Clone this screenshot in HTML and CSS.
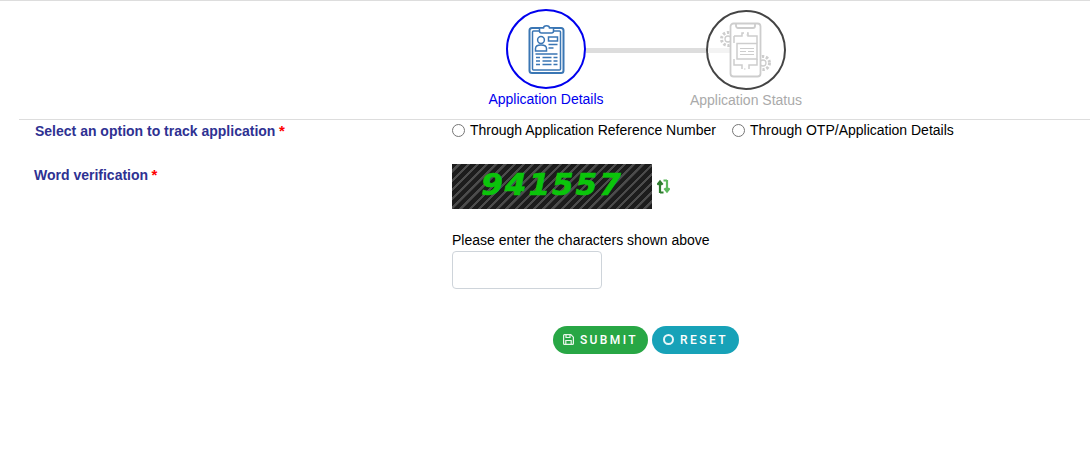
FILE: index.html
```html
<!DOCTYPE html>
<html lang="en">
<head>
    <meta charset="UTF-8">
    <meta name="viewport" content="width=device-width, initial-scale=1.0">
    <title>Track Application</title>
    <link rel="stylesheet" href="styles.css">
</head>
<body>
    <div class="stepper">
        <div class="step step-active">
            <div class="step-circle">
                <svg width="40" height="52" viewBox="-2.500 0 40 52" fill="none" stroke="#3a76b4" stroke-width="1.500">
                    <rect x="1" y="5" width="34" height="45" rx="2.500" stroke-width="2"/>
                    <rect x="4" y="8" width="28" height="39" rx="1"/>
                    <path d="M11 8V5h4c0-3 6-3 6 0h4v3c0 1-1 2-2 2H13c-1 0-2-1-2-2z" fill="#fff"/>
                    <circle cx="12.500" cy="17" r="3.400"/>
                    <path d="M7 28v-2.500c0-2.500 3-3.500 5.500-3.500s5.500 1 5.500 3.500V28z"/>
                    <rect x="20" y="14" width="9" height="4"/>
                    <path d="M20 21.500h9M20 25h5M7 31h22"/>
                    <path d="M7.500 34.500h4M14 34.500h9M25 34.500h4M7.500 38h4M14 38h9M25 38h4M7.500 41.500h4M14 41.500h9M25 41.500h4" stroke-width="1.700"/>
                </svg>
            </div>
            <span class="step-label">Application Details</span>
        </div>
        <div class="step step-pending">
            <div class="step-circle">
                <svg width="58" height="56" viewBox="0 0 58 56" fill="none" stroke="#cdcdcd" stroke-width="1.500">
                    <g stroke-width="1.300">
                        <circle cx="11" cy="17" r="6.500" stroke-width="3" stroke-dasharray="2.400 1.700"/>
                        <circle cx="11" cy="17" r="3"/>
                        <circle cx="46" cy="41" r="6.500" stroke-width="3" stroke-dasharray="2.400 1.700"/>
                        <circle cx="46" cy="41" r="3"/>
                    </g>
                    <rect x="13.500" y="1.500" width="30" height="53" rx="3" fill="#fff" stroke-width="1.800"/>
                    <path d="M19 2v2c0 1 1 2 2 2h15c1 0 2-1 2-2V2" stroke-width="1.800"/>
                    <path d="M17 14h8v-3h2M30 11h1v3h9v7M17 14v7M17 37v6h8v4M32 47v-4h8v-6"/>
                    <path d="M27 47h1.500M29.500 13h1.500" stroke-width="1.200"/>
                    <rect x="20" y="21.500" width="20" height="15.500" fill="#fff"/>
                    <path d="M23 26.500h14M23 29.500h6M31 29.500h6M23 32.500h14" stroke-width="1.200"/>
                </svg>
            </div>
            <span class="step-label">Application Status</span>
        </div>
    </div>

    <form class="track-form">
        <div class="form-row row-option">
            <label class="field-label">Select an option to track application<span class="req">*</span></label>
            <div class="radio-group">
                <label class="radio-item"><input type="radio" name="trackBy"> Through Application Reference Number</label>
                <label class="radio-item"><input type="radio" name="trackBy"> Through OTP/Application Details</label>
            </div>
        </div>
        <div class="form-row row-captcha">
            <label class="field-label">Word verification<span class="req">*</span></label>
            <div class="captcha-col">
                <div class="captcha-line">
                    <div class="captcha-img">941557</div>
                    <svg class="refresh" width="13" height="15" viewBox="0 0 13 15" fill="none" stroke-width="2.200">
                        <path d="M3 14V3M.4 5.800 3 2.500l2.600 3.300M3 13.500h3.500" stroke="#2e7d2e"/>
                        <path d="M10 1v11M7.400 9.200l2.600 3.300 2.600-3.300M10 1.500H6.500" stroke="#5cb85c"/>
                    </svg>
                </div>
                <label class="captcha-hint" for="captcha">Please enter the characters shown above</label>
                <input class="captcha-input" type="text" id="captcha">
            </div>
        </div>
        <div class="btn-row">
            <button type="button" class="btn btn-submit">
                <svg width="11" height="11" viewBox="0 0 11 11" fill="none" stroke="#e8f5ea" stroke-width="1.200"><path d="M.6 1.500c0-.5.4-.9.9-.9h6.300l2.600 2.600v6.300c0 .5-.4.9-.9.9h-8c-.5 0-.9-.4-.9-.9z"/><path d="M3 1v2.500h4V1M2.800 10V6.500h5.400V10"/></svg>
                SUBMIT
            </button>
            <button type="button" class="btn btn-reset"><span class="ring"></span>RESET</button>
        </div>
    </form>
</body>
</html>
```

FILE: styles.css
```css
* {
    margin: 0;
    padding: 0;
    box-sizing: border-box;
}

body {
    font-family: "Liberation Sans", Arial, sans-serif;
    background-color: white;
    border-top: 1px solid #ddd;
    height: 470px;
    overflow: hidden;
}

/* Stepper */
.stepper {
    display: flex;
    justify-content: center;
    margin-left: 202px;
    padding-top: 8px;
    height: 118px;
}

.step {
    width: 200px;
    display: flex;
    flex-direction: column;
    align-items: center;
    position: relative;
}

.step-circle {
    width: 80px;
    height: 80px;
    border-radius: 50%;
    display: flex;
    justify-content: center;
    align-items: center;
}

.step-active .step-circle {
    border: 2px solid #0000ee;
}

.step-pending {
    padding-top: 1px;
}

.step-pending .step-circle {
    border: 2px solid #444;
}

.step-active::after {
    content: "";
    position: absolute;
    left: 140px;
    top: 39px;
    width: 120px;
    height: 5px;
    background-color: #ddd;
}

/* line fades out under the second icon */
.step-pending::before {
    content: "";
    position: absolute;
    left: 62px;
    top: 39px;
    width: 30px;
    height: 5px;
    background-color: #f3f3f3;
}

.step-pending svg {
    position: relative;
    z-index: 1;
}

.step-label {
    font-size: 14px;
    margin-top: 1px;
    line-height: 18px;
}

.step-active .step-label {
    color: #0000ee;
}

.step-pending .step-label {
    color: #aaa;
}

/* Form */
.track-form {
    margin-left: 19px;
    border-top: 1px solid #ddd;
}

.form-row {
    display: flex;
}

.field-label {
    width: 433px;
    font-size: 14px;
    font-weight: bold;
    color: #2e3192;
    line-height: 20px;
}

.req {
    color: red;
    font-size: 15px;
    margin-left: 3.500px;
}

.row-option {
    padding-top: 1px;
    height: 44px;
}

.row-option .field-label {
    padding-left: 16px;
}

.row-captcha .field-label {
    padding-left: 15px;
    padding-top: 1px;
}

.radio-group {
    display: flex;
    align-items: flex-start;
    gap: 16px;
    font-size: 14px;
    line-height: 18px;
    color: #000;
}

.radio-item {
    display: flex;
    align-items: center;
    gap: 5px;
}

.radio-item input {
    width: 13px;
    height: 13px;
}

.captcha-line {
    display: flex;
    align-items: center;
    gap: 5px;
}

.captcha-img {
    width: 200px;
    height: 45px;
    background: repeating-linear-gradient(-45deg, #1c1c1c 0, #1c1c1c 4px, #4c4c4c 4.500px, #4c4c4c 6.500px);
    color: #0bc40b;
    font-family: "DejaVu Sans", sans-serif;
    font-size: 31px;
    font-weight: bold;
    font-style: italic;
    letter-spacing: 2px;
    -webkit-text-stroke: 0.7px #0bc40b;
    line-height: 41px;
    text-align: center;
}

.refresh {
    margin-bottom: 1px;
}

.captcha-hint {
    display: block;
    margin-top: 22px;
    font-size: 14px;
    line-height: 18px;
    color: #000;
}

.captcha-input {
    display: block;
    width: 150px;
    height: 38px;
    margin-top: 2px;
    border: 1px solid #ced4da;
    border-radius: 4px;
}

.btn-row {
    display: flex;
    gap: 4px;
    margin-top: 37px;
    margin-left: 534px;
}

.btn {
    height: 28px;
    border: none;
    border-radius: 14px;
    color: white;
    font-family: Roboto, Arial, sans-serif;
    font-size: 12px;
    font-weight: 500;
    letter-spacing: 2.400px;
    line-height: 26px;
    display: flex;
    align-items: center;
    justify-content: center;
    gap: 6px;
    padding-bottom: 1px;
}

.btn-submit {
    width: 95px;
    background-color: #28a745;
}

.btn-reset {
    width: 87px;
    background-color: #17a2b8;
}

.ring {
    width: 11px;
    height: 11px;
    border: 2.500px solid #e6f6f8;
    border-radius: 50%;
}
```
